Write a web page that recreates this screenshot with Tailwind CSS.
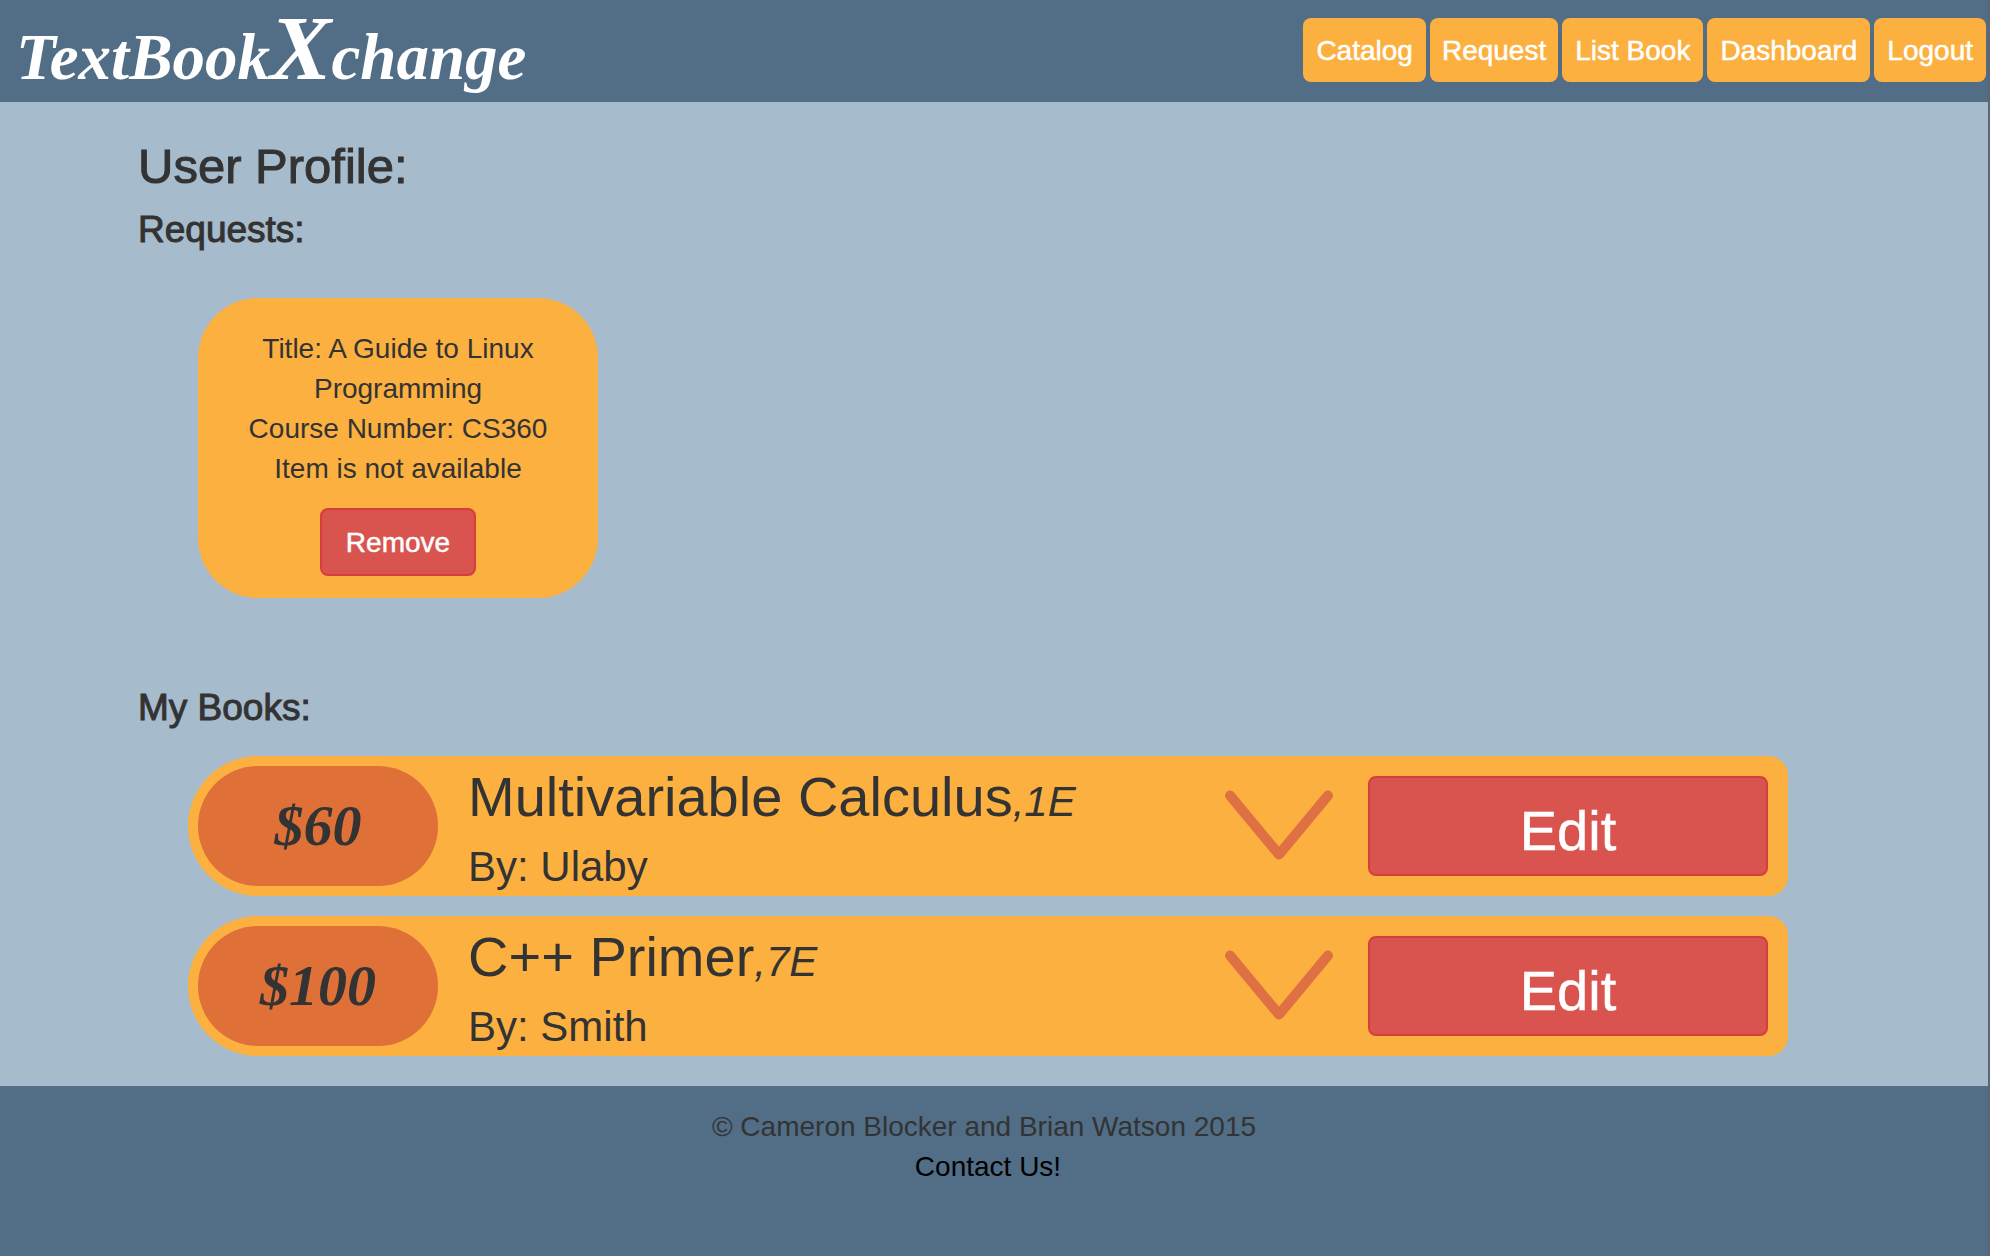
<!DOCTYPE html>
<html lang="en">
<head>
<meta charset="utf-8">
<meta name="viewport" content="width=device-width, initial-scale=1">
<title>TextBookXchange</title>
<script src="https://cdn.jsdelivr.net/npm/@tailwindcss/browser@4"></script>
</head>
<body class="flex min-h-screen flex-col border-r-2 border-[#606470] bg-[#a6bbcc] font-['Liberation_Sans',Arial,sans-serif] text-[28px] leading-10 text-[#333]">
  <header class="flex h-[102px] items-start justify-between bg-[#516e86] pl-4 pr-[2px]">
    <a href="#" class="font-['Liberation_Serif',serif] text-[65px] font-bold italic leading-[96px] text-white">TextBook<span class="text-[92px]">X</span>change</a>
    <nav class="mt-[18px] flex gap-1 text-white [-webkit-text-stroke:0.5px]">
      <a href="#" class="rounded-lg bg-[#fcb040] px-[13px] pb-[11px] pt-[13px]">Catalog</a>
      <a href="#" class="rounded-lg bg-[#fcb040] px-3 pb-[11px] pt-[13px]">Request</a>
      <a href="#" class="rounded-lg bg-[#fcb040] px-[13px] pb-[11px] pt-[13px]">List Book</a>
      <a href="#" class="rounded-lg bg-[#fcb040] px-[13px] pb-[11px] pt-[13px]">Dashboard</a>
      <a href="#" class="rounded-lg bg-[#fcb040] px-[13px] pb-[11px] pt-[13px]">Logout</a>
    </nav>
  </header>

  <main class="px-[138px] pb-[30px] pt-[38px]">
    <h1 class="text-[49px] leading-[52px] [-webkit-text-stroke:1px]">User Profile:</h1>
    <h2 class="mt-[18px] text-[37px] leading-10 [-webkit-text-stroke:1px]">Requests:</h2>
    <section class="ml-[60px] mt-12 w-[400px] rounded-[60px] bg-[#fcb040] px-10 pb-[22px] pt-[31px] text-center">
      <p>Title: A Guide to Linux Programming</p>
      <p>Course Number: CS360</p>
      <p>Item is not available</p>
      <button type="button" class="mx-auto mt-[19px] block h-[68px] w-[156px] rounded-lg border-2 border-[#d43f3a] bg-[#d9534f] pt-[2px] text-white [-webkit-text-stroke:0.5px]">Remove</button>
    </section>

    <h2 class="mt-[90px] text-[37px] leading-10 [-webkit-text-stroke:1px]">My Books:</h2>
    <ul class="ml-[50px] mr-[62px] mt-7 flex flex-col gap-5">
      <li class="flex h-[140px] items-start rounded-l-[70px] rounded-r-[20px] bg-[#fcb040] pl-[10px] pr-5">
        <div class="mt-[10px] flex h-[120px] w-[240px] shrink-0 items-center justify-center rounded-[60px] bg-[#de7038] font-['Liberation_Serif',serif] text-[58px] font-bold italic">$60</div>
        <div class="ml-[30px] mt-[11px] min-w-0 flex-1">
          <h3 class="h-[60px] text-[56px] leading-[60px]">Multivariable Calculus<em class="text-[42px]">,1E</em></h3>
          <p class="mt-[17px] text-[42px] leading-[46px]">By: Ulaby</p>
        </div>
        <button type="button" aria-label="Show details" class="mr-[35px] mt-[34px] shrink-0">
          <svg width="108" height="70" viewBox="0 0 108 70" fill="none" stroke="#de7043" stroke-width="10" stroke-linecap="round" stroke-linejoin="round"><path d="M5 5.500L54 64.500L103 5.500"/></svg>
        </button>
        <button type="button" class="mt-5 h-[100px] w-[400px] shrink-0 rounded-lg border-2 border-[#d43f3a] bg-[#d9534f] pt-[10px] text-[56px] leading-[60px] text-white [-webkit-text-stroke:0.5px]">Edit</button>
      </li>
      <li class="flex h-[140px] items-start rounded-l-[70px] rounded-r-[20px] bg-[#fcb040] pl-[10px] pr-5">
        <div class="mt-[10px] flex h-[120px] w-[240px] shrink-0 items-center justify-center rounded-[60px] bg-[#de7038] font-['Liberation_Serif',serif] text-[58px] font-bold italic">$100</div>
        <div class="ml-[30px] mt-[11px] min-w-0 flex-1">
          <h3 class="h-[60px] text-[56px] leading-[60px]">C++ Primer<em class="text-[42px]">,7E</em></h3>
          <p class="mt-[17px] text-[42px] leading-[46px]">By: Smith</p>
        </div>
        <button type="button" aria-label="Show details" class="mr-[35px] mt-[34px] shrink-0">
          <svg width="108" height="70" viewBox="0 0 108 70" fill="none" stroke="#de7043" stroke-width="10" stroke-linecap="round" stroke-linejoin="round"><path d="M5 5.500L54 64.500L103 5.500"/></svg>
        </button>
        <button type="button" class="mt-5 h-[100px] w-[400px] shrink-0 rounded-lg border-2 border-[#d43f3a] bg-[#d9534f] pt-[10px] text-[56px] leading-[60px] text-white [-webkit-text-stroke:0.5px]">Edit</button>
      </li>
    </ul>
  </main>

  <footer class="flex-1 bg-[#516e86] pr-3 pt-[21px] text-center">
    <p class="pr-2">© Cameron Blocker and Brian Watson 2015</p>
    <a href="#" class="text-black">Contact Us!</a>
  </footer>
</body>
</html>
